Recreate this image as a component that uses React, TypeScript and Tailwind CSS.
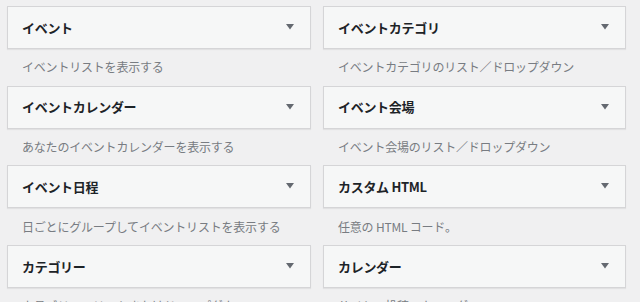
import React from "react";

const items: [string, string][] = [
  ["イベント", "イベントリストを表示する"],
  ["イベントカテゴリ", "イベントカテゴリのリスト／ドロップダウン"],
  ["イベントカレンダー", "あなたのイベントカレンダーを表示する"],
  ["イベント会場", "イベント会場のリスト／ドロップダウン"],
  ["イベント日程", "日ごとにグループしてイベントリストを表示する"],
  ["カスタム HTML", "任意の HTML コード。"],
  ["カテゴリー", "カテゴリーのリストまたはドロップダウン。"],
  ["カレンダー", "サイトの投稿のカレンダー。"],
];

function Widget({ title, desc }: { title: string; desc: string }) {
  return (
    <div className="flex flex-col">
      <div className="h-[43px] border border-[#d5d5d7] bg-[#f6f7f7] shadow-[0_1px_1px_rgba(0,0,0,0.06)] flex items-center justify-between pl-[14px] pr-[16px]">
        <span className="text-[13px] font-bold text-[#1d2327] tracking-[-0.3px]">{title}</span>
        <svg width="8" height="6" viewBox="0 0 8 6" className="mb-[1px]">
          <path d="M0 0 H8 L4 5.5 Z" fill="#646970" />
        </svg>
      </div>
      <div className="h-[36.67px] flex items-center pl-[15px] text-[12px] text-[#787c82] tracking-[-0.2px]">
        {desc}
      </div>
    </div>
  );
}

export default function App() {
  return (
    <div
      className="w-[640px] h-[302px] overflow-hidden bg-[#f0f0f1] pl-[7px] pt-[6px]"
      style={{ fontFamily: '"Noto Sans CJK JP", "Noto Sans", sans-serif' }}
    >
      <div className="grid grid-cols-[304px_303px] gap-x-[12px]">
        {items.map(([t, d]) => (
          <Widget key={t} title={t} desc={d} />
        ))}
      </div>
    </div>
  );
}
